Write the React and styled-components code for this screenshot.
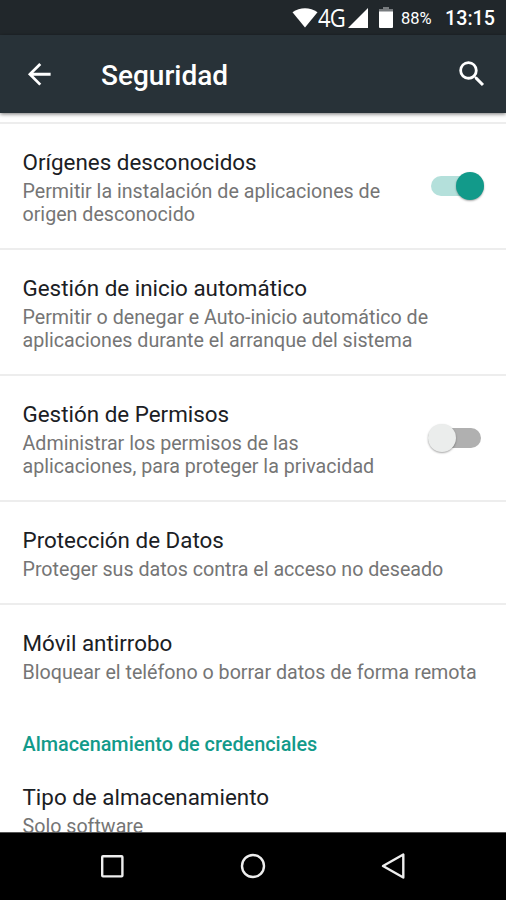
import React from 'react'
import styled, { createGlobalStyle } from 'styled-components';
import { useState } from "react";

const GlobalStyle = createGlobalStyle`
    * {
        box-sizing:border-box;
    }
    body {
        margin:0;
        background-color:white;
        font-family:Roboto, "Noto Sans", sans-serif;
    }
`

const Screen = styled.div`
    display:flex;
    flex-direction:column;
    width:506px;
    height:900px;
    overflow:hidden;
    background-color:white;
`

const StatusBar = styled.div`
    display:flex;
    flex:none;
    align-items:center;
    justify-content:flex-end;
    height:35px;
    padding-right:11px;
    background-color:#21272b;
    color:white;
`

const Network = styled.span`
    width:30px;
    margin-bottom:1px;
    font-family:"Open Sans", "Noto Sans", sans-serif;
    font-size:25px;
    line-height:34px;
    letter-spacing:-1px;
    white-space:nowrap;
    transform:scaleX(0.88);
    transform-origin:left center;
`

const Percent = styled.span`
    width:32px;
    margin:2px 0 0 8px;
    font-size:16.5px;
    line-height:35px;
    white-space:nowrap;
`

const Clock = styled.span`
    margin:2px 0 0 12px;
    font-size:19.7px;
    font-weight:500;
    line-height:35px;
`

const Toolbar = styled.header`
    display:flex;
    flex:none;
    align-items:center;
    height:78px;
    padding:0 17px 0 22px;
    background-color:#283238;
    box-shadow:0 1px 4px rgba(0, 0, 0, 0.55);
    color:white;
    z-index:1;
`

const ToolbarTitle = styled.h1`
    flex:1;
    margin:2px 0 0 45px;
    font-size:28px;
    font-weight:500;
    line-height:33px;
`

const IconButton = styled.button`
    display:flex;
    padding:0;
    border:0;
    background:none;
    color:inherit;
`

const List = styled.main`
    flex:1;
    min-height:0;
    padding-top:9px;
    overflow:hidden;
`

const Row = styled.section`
    display:flex;
    align-items:center;
    justify-content:space-between;
    height:${props => props.$lines === 2 ? 126 : 103}px;
    padding:0 22px 1px 22.5px;
    border-top:2px solid ${props => props.$divider ? "#ededed" : "transparent"};
`

const RowText = styled.div`
    padding-top:3px;
`

const RowTitle = styled.h2`
    margin:0 0 3px;
    color:#1b2024;
    font-size:22.4px;
    font-weight:400;
    line-height:29px;
`

const Summary = styled.p`
    margin:0;
    color:#757575;
    font-size:19.66px;
    line-height:23px;
    white-space:pre-line;
`

const Category = styled.h3`
    height:51px;
    margin:0;
    padding:27px 22.5px 0;
    color:#129a8a;
    font-size:19.84px;
    font-weight:500;
    line-height:23px;
`

const SwitchTrack = styled.button`
    display:flex;
    flex:none;
    align-items:center;
    justify-content:${props => props.$on ? "flex-end" : "flex-start"};
    width:53px;
    height:20px;
    margin-right:${props => props.$on ? 0 : 3}px;
    padding:0;
    border:0;
    border-radius:10px;
    background-color:${props => props.$on ? "#b4e0db" : "#b0b0b0"};
`

const Thumb = styled.span`
    flex:none;
    width:28px;
    height:28px;
    border-radius:50%;
    background-color:${props => props.$on ? "#129a8a" : "#ebedec"};
    box-shadow:0 1px 2px rgba(0, 0, 0, 0.35);
`

const NavBar = styled.nav`
    display:flex;
    flex:none;
    align-items:center;
    justify-content:space-between;
    height:68px;
    padding:0 98px 2px;
    border-top:1px solid #555;
    background-color:black;
    color:#eeeeee;
    z-index:1;
`

const Switch = ({initial}) => {
    const [on, setOn] = useState(initial);

    return (
      <SwitchTrack type="button" role="switch" aria-checked={on} $on={on} onClick={() => setOn(!on)}>
        <Thumb $on={on} />
      </SwitchTrack>
    );
}

const settings = [
    { title: "Orígenes desconocidos", summary: "Permitir la instalación de aplicaciones de\norigen desconocido", on: true },
    { title: "Gestión de inicio automático", summary: "Permitir o denegar e Auto-inicio automático de\naplicaciones durante el arranque del sistema" },
    { title: "Gestión de Permisos", summary: "Administrar los permisos de las\naplicaciones, para proteger la privacidad", on: false },
    { title: "Protección de Datos", summary: "Proteger sus datos contra el acceso no deseado" },
    { title: "Móvil antirrobo", summary: "Bloquear el teléfono o borrar datos de forma remota" },
]

const Setting = ({item, divider}) => (
    <Row $divider={divider} $lines={item.summary.split("\n").length}>
      <RowText>
        <RowTitle>{item.title}</RowTitle>
        <Summary>{item.summary}</Summary>
      </RowText>
      {item.on !== undefined && <Switch initial={item.on} />}
    </Row>
)

const BatteryIcon = styled.svg`
    margin-left:11px;
`

const App = () => {
    return (
      <Screen>
        <GlobalStyle />
        <StatusBar>
          <svg width="26" height="20" viewBox="0 0 26 20" fill="currentColor">
            <path d="M0.5 4.3C8 -1.2 18 -1.2 25.5 4.3L13 19.6z" />
          </svg>
          <Network>4G</Network>
          <svg width="20" height="20" viewBox="0 0 20 20" fill="currentColor">
            <path d="M20 0V20H0z" />
          </svg>
          <BatteryIcon width="14" height="21" viewBox="0 0 14 21">
            <path d="M4 0h6v2h4v3H0V2h4z" fill="#777b7e" />
            <path d="M0 4.5h14V20a1 1 0 0 1-1 1H1a1 1 0 0 1-1-1z" fill="white" />
          </BatteryIcon>
          <Percent>88%</Percent>
          <Clock>13:15</Clock>
        </StatusBar>
        <Toolbar>
          <IconButton aria-label="Atrás">
            <svg width="34" height="34" viewBox="0 0 24 24" fill="currentColor">
              <path d="M20.2 11.2H8l5.6-5.6-1.4-1.4-8 8 8 8 1.4-1.4L8 13.2h12.2z" />
            </svg>
          </IconButton>
          <ToolbarTitle>Seguridad</ToolbarTitle>
          <IconButton aria-label="Buscar">
            <svg width="34" height="34" viewBox="0 0 24 24" fill="currentColor">
              <path d="M15.5 14h-.79l-.28-.27A6.47 6.47 0 0 0 16 9.5 6.5 6.5 0 1 0 9.5 16c1.61 0 3.09-.59 4.23-1.57l.27.28v.79l5 4.99L20.49 19l-4.99-5zm-6 0C7.01 14 5 11.99 5 9.5S7.01 5 9.5 5 14 7.01 14 9.5 11.99 14 9.5 14z" />
            </svg>
          </IconButton>
        </Toolbar>
        <List>
          {settings.map(item => <Setting key={item.title} item={item} divider />)}
          <Category>Almacenamiento de credenciales</Category>
          <Setting item={{title: "Tipo de almacenamiento", summary: "Solo software"}} />
        </List>
        <NavBar>
          <svg width="28" height="28" viewBox="0 0 28 28" fill="none" stroke="currentColor" strokeWidth="2.4">
            <rect x="4.2" y="4.2" width="20.2" height="20.2" rx="0.8" />
          </svg>
          <svg width="28" height="28" viewBox="0 0 28 28" fill="none" stroke="currentColor" strokeWidth="2.4">
            <circle cx="14" cy="14" r="11" />
          </svg>
          <svg width="28" height="28" viewBox="0 0 28 28" fill="none" stroke="currentColor" strokeWidth="2.4" strokeLinejoin="round">
            <path d="M23.3 2.5V25.5L3 14z" />
          </svg>
        </NavBar>
      </Screen>
    );
}

export default App;
